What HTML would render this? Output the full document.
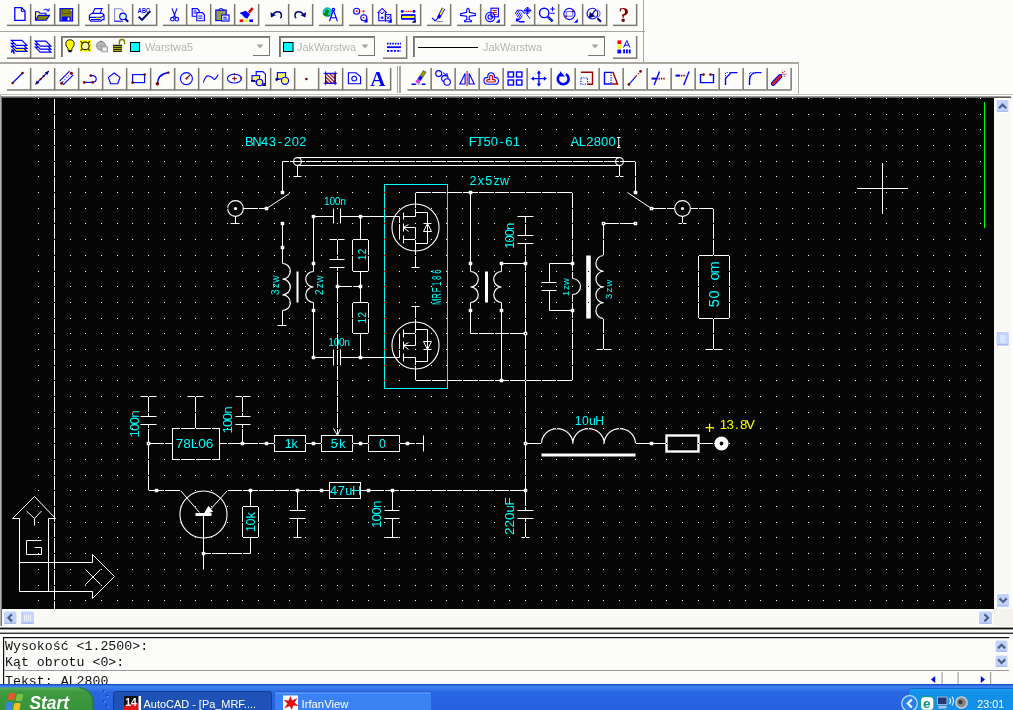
<!DOCTYPE html>
<html lang="pl"><head><meta charset="utf-8"><title>AutoCAD - [Pa_MRF186.dwg]</title>
<style>
html,body{margin:0;padding:0;background:#fcfdfa;}
body{width:1013px;height:710px;overflow:hidden;position:relative;}
svg{position:absolute;left:0;top:0;display:block;}
.cad text{font-family:"Liberation Sans","DejaVu Sans",sans-serif;text-anchor:middle;}
.cmd{position:absolute;left:5px;top:639.200px;margin:0;font-family:"Liberation Mono","DejaVu Sans Mono",monospace;font-size:13.250px;line-height:15.500px;color:#111;white-space:pre;}
.cmd3{top:674.200px;}
.tbtxt{font-family:"Liberation Sans",sans-serif;fill:#b4b4b4;}
</style></head><body>
<svg width="1013" height="710" viewBox="0 0 1013 710">
<g shape-rendering="crispEdges">
<rect x="0" y="30.5" width="645" height="1.6" fill="#a9a7a0"/>
<rect x="0" y="62" width="799" height="1.6" fill="#a9a7a0"/>
<rect x="643" y="0" width="1.4" height="63" fill="#a9a7a0"/>
<rect x="798" y="62" width="1.4" height="33" fill="#a9a7a0"/>
<rect x="0" y="94" width="1013" height="1" fill="#c2c2be"/>
<rect x="0" y="96" width="1013" height="1" fill="#9c9c9c"/>
<rect x="0" y="97" width="1013" height="1" fill="#5e5e5e"/>
<rect x="0" y="95" width="1" height="531" fill="#b4b4b4"/>
<rect x="1" y="96" width="1" height="530" fill="#777"/>
<rect x="396.6" y="66" width="1.2" height="27" fill="#a9a7a0"/>
<rect x="399.4" y="66" width="1.2" height="27" fill="#a9a7a0"/>
<rect x="61" y="36" width="209" height="2" fill="#8a877f"/>
<rect x="61" y="36" width="2" height="21" fill="#8a877f"/>
<rect x="61" y="36" width="209" height="1" fill="#74716a"/>
<rect x="61" y="36" width="1" height="21" fill="#74716a"/>
<rect x="268.8" y="38" width="1.3" height="18.2" fill="#7b7870"/>
<rect x="252.5" y="55" width="16" height="1.3" fill="#7b7870"/>
<rect x="279" y="36" width="96" height="2" fill="#8a877f"/>
<rect x="279" y="36" width="2" height="21" fill="#8a877f"/>
<rect x="279" y="36" width="96" height="1" fill="#74716a"/>
<rect x="279" y="36" width="1" height="21" fill="#74716a"/>
<rect x="373.8" y="38" width="1.3" height="18.2" fill="#7b7870"/>
<rect x="357.5" y="55" width="16" height="1.3" fill="#7b7870"/>
<rect x="413" y="36" width="192" height="2" fill="#8a877f"/>
<rect x="413" y="36" width="2" height="21" fill="#8a877f"/>
<rect x="413" y="36" width="192" height="1" fill="#74716a"/>
<rect x="413" y="36" width="1" height="21" fill="#74716a"/>
<rect x="603.8" y="38" width="1.3" height="18.2" fill="#7b7870"/>
<rect x="587.5" y="55" width="16" height="1.3" fill="#7b7870"/>
<rect x="418" y="47" width="60" height="1" fill="#000"/>
</g>
<g>
<rect x="29.9" y="4" width="1.500" height="22.1" fill="#7b7870"/>
<rect x="7" y="24.6" width="23" height="1.500" fill="#7b7870"/>
<rect x="53.9" y="4" width="1.500" height="22.1" fill="#7b7870"/>
<rect x="31" y="24.6" width="23" height="1.500" fill="#7b7870"/>
<rect x="77.9" y="4" width="1.500" height="22.1" fill="#7b7870"/>
<rect x="55" y="24.6" width="23" height="1.500" fill="#7b7870"/>
<rect x="107.9" y="4" width="1.500" height="22.1" fill="#7b7870"/>
<rect x="85" y="24.6" width="23" height="1.500" fill="#7b7870"/>
<rect x="131.9" y="4" width="1.500" height="22.1" fill="#7b7870"/>
<rect x="109" y="24.6" width="23" height="1.500" fill="#7b7870"/>
<rect x="155.9" y="4" width="1.500" height="22.1" fill="#7b7870"/>
<rect x="133" y="24.6" width="23" height="1.500" fill="#7b7870"/>
<rect x="185.9" y="4" width="1.500" height="22.1" fill="#7b7870"/>
<rect x="163" y="24.6" width="23" height="1.500" fill="#7b7870"/>
<rect x="209.9" y="4" width="1.500" height="22.1" fill="#7b7870"/>
<rect x="187" y="24.6" width="23" height="1.500" fill="#7b7870"/>
<rect x="233.9" y="4" width="1.500" height="22.1" fill="#7b7870"/>
<rect x="211" y="24.6" width="23" height="1.500" fill="#7b7870"/>
<rect x="257.9" y="4" width="1.500" height="22.1" fill="#7b7870"/>
<rect x="235" y="24.6" width="23" height="1.500" fill="#7b7870"/>
<rect x="287.9" y="4" width="1.500" height="22.1" fill="#7b7870"/>
<rect x="265" y="24.6" width="23" height="1.500" fill="#7b7870"/>
<rect x="311.9" y="4" width="1.500" height="22.1" fill="#7b7870"/>
<rect x="289" y="24.6" width="23" height="1.500" fill="#7b7870"/>
<rect x="341.9" y="4" width="1.500" height="22.1" fill="#7b7870"/>
<rect x="319" y="24.6" width="23" height="1.500" fill="#7b7870"/>
<rect x="371.9" y="4" width="1.500" height="22.1" fill="#7b7870"/>
<rect x="349" y="24.6" width="23" height="1.500" fill="#7b7870"/>
<rect x="395.9" y="4" width="1.500" height="22.1" fill="#7b7870"/>
<rect x="373" y="24.6" width="23" height="1.500" fill="#7b7870"/>
<rect x="419.9" y="4" width="1.500" height="22.1" fill="#7b7870"/>
<rect x="397" y="24.6" width="23" height="1.500" fill="#7b7870"/>
<rect x="449.9" y="4" width="1.500" height="22.1" fill="#7b7870"/>
<rect x="427" y="24.6" width="23" height="1.500" fill="#7b7870"/>
<rect x="479.9" y="4" width="1.500" height="22.1" fill="#7b7870"/>
<rect x="457" y="24.6" width="23" height="1.500" fill="#7b7870"/>
<rect x="503.9" y="4" width="1.500" height="22.1" fill="#7b7870"/>
<rect x="481" y="24.6" width="23" height="1.500" fill="#7b7870"/>
<rect x="533.9" y="4" width="1.500" height="22.1" fill="#7b7870"/>
<rect x="511" y="24.6" width="23" height="1.500" fill="#7b7870"/>
<rect x="557.9" y="4" width="1.500" height="22.1" fill="#7b7870"/>
<rect x="535" y="24.6" width="23" height="1.500" fill="#7b7870"/>
<rect x="581.9" y="4" width="1.500" height="22.1" fill="#7b7870"/>
<rect x="559" y="24.6" width="23" height="1.500" fill="#7b7870"/>
<rect x="605.9" y="4" width="1.500" height="22.1" fill="#7b7870"/>
<rect x="583" y="24.6" width="23" height="1.500" fill="#7b7870"/>
<rect x="635.9" y="4" width="1.500" height="22.1" fill="#7b7870"/>
<rect x="613" y="24.6" width="23" height="1.500" fill="#7b7870"/>
<rect x="29.9" y="36" width="1.500" height="22.9" fill="#7b7870"/>
<rect x="7" y="57.4" width="23" height="1.500" fill="#7b7870"/>
<rect x="53.9" y="36" width="1.500" height="22.9" fill="#7b7870"/>
<rect x="31" y="57.4" width="23" height="1.500" fill="#7b7870"/>
<rect x="405.9" y="36" width="1.500" height="22.9" fill="#7b7870"/>
<rect x="383" y="57.4" width="23" height="1.500" fill="#7b7870"/>
<rect x="635.9" y="36" width="1.500" height="22.9" fill="#7b7870"/>
<rect x="613" y="57.4" width="23" height="1.500" fill="#7b7870"/>
<rect x="29.9" y="68" width="1.500" height="22.7" fill="#7b7870"/>
<rect x="7" y="89.2" width="23" height="1.500" fill="#7b7870"/>
<rect x="53.9" y="68" width="1.500" height="22.7" fill="#7b7870"/>
<rect x="31" y="89.2" width="23" height="1.500" fill="#7b7870"/>
<rect x="77.9" y="68" width="1.500" height="22.7" fill="#7b7870"/>
<rect x="55" y="89.2" width="23" height="1.500" fill="#7b7870"/>
<rect x="101.9" y="68" width="1.500" height="22.7" fill="#7b7870"/>
<rect x="79" y="89.2" width="23" height="1.500" fill="#7b7870"/>
<rect x="125.9" y="68" width="1.500" height="22.7" fill="#7b7870"/>
<rect x="103" y="89.2" width="23" height="1.500" fill="#7b7870"/>
<rect x="149.9" y="68" width="1.500" height="22.7" fill="#7b7870"/>
<rect x="127" y="89.2" width="23" height="1.500" fill="#7b7870"/>
<rect x="173.9" y="68" width="1.500" height="22.7" fill="#7b7870"/>
<rect x="151" y="89.2" width="23" height="1.500" fill="#7b7870"/>
<rect x="197.9" y="68" width="1.500" height="22.7" fill="#7b7870"/>
<rect x="175" y="89.2" width="23" height="1.500" fill="#7b7870"/>
<rect x="221.9" y="68" width="1.500" height="22.7" fill="#7b7870"/>
<rect x="199" y="89.2" width="23" height="1.500" fill="#7b7870"/>
<rect x="245.9" y="68" width="1.500" height="22.7" fill="#7b7870"/>
<rect x="223" y="89.2" width="23" height="1.500" fill="#7b7870"/>
<rect x="269.9" y="68" width="1.500" height="22.7" fill="#7b7870"/>
<rect x="247" y="89.2" width="23" height="1.500" fill="#7b7870"/>
<rect x="293.9" y="68" width="1.500" height="22.7" fill="#7b7870"/>
<rect x="271" y="89.2" width="23" height="1.500" fill="#7b7870"/>
<rect x="317.9" y="68" width="1.500" height="22.7" fill="#7b7870"/>
<rect x="295" y="89.2" width="23" height="1.500" fill="#7b7870"/>
<rect x="341.9" y="68" width="1.500" height="22.7" fill="#7b7870"/>
<rect x="319" y="89.2" width="23" height="1.500" fill="#7b7870"/>
<rect x="365.9" y="68" width="1.500" height="22.7" fill="#7b7870"/>
<rect x="343" y="89.2" width="23" height="1.500" fill="#7b7870"/>
<rect x="389.9" y="68" width="1.500" height="22.7" fill="#7b7870"/>
<rect x="367" y="89.2" width="23" height="1.500" fill="#7b7870"/>
<rect x="430.4" y="68" width="1.500" height="22.7" fill="#7b7870"/>
<rect x="407.5" y="89.2" width="23" height="1.500" fill="#7b7870"/>
<rect x="454.4" y="68" width="1.500" height="22.7" fill="#7b7870"/>
<rect x="431.5" y="89.2" width="23" height="1.500" fill="#7b7870"/>
<rect x="478.4" y="68" width="1.500" height="22.7" fill="#7b7870"/>
<rect x="455.5" y="89.2" width="23" height="1.500" fill="#7b7870"/>
<rect x="502.4" y="68" width="1.500" height="22.7" fill="#7b7870"/>
<rect x="479.5" y="89.2" width="23" height="1.500" fill="#7b7870"/>
<rect x="526.4" y="68" width="1.500" height="22.7" fill="#7b7870"/>
<rect x="503.5" y="89.2" width="23" height="1.500" fill="#7b7870"/>
<rect x="550.4" y="68" width="1.500" height="22.7" fill="#7b7870"/>
<rect x="527.5" y="89.2" width="23" height="1.500" fill="#7b7870"/>
<rect x="574.4" y="68" width="1.500" height="22.7" fill="#7b7870"/>
<rect x="551.5" y="89.2" width="23" height="1.500" fill="#7b7870"/>
<rect x="598.4" y="68" width="1.500" height="22.7" fill="#7b7870"/>
<rect x="575.5" y="89.2" width="23" height="1.500" fill="#7b7870"/>
<rect x="622.4" y="68" width="1.500" height="22.7" fill="#7b7870"/>
<rect x="599.5" y="89.2" width="23" height="1.500" fill="#7b7870"/>
<rect x="646.4" y="68" width="1.500" height="22.7" fill="#7b7870"/>
<rect x="623.5" y="89.2" width="23" height="1.500" fill="#7b7870"/>
<rect x="670.4" y="68" width="1.500" height="22.7" fill="#7b7870"/>
<rect x="647.5" y="89.2" width="23" height="1.500" fill="#7b7870"/>
<rect x="694.4" y="68" width="1.500" height="22.7" fill="#7b7870"/>
<rect x="671.5" y="89.2" width="23" height="1.500" fill="#7b7870"/>
<rect x="718.4" y="68" width="1.500" height="22.7" fill="#7b7870"/>
<rect x="695.5" y="89.2" width="23" height="1.500" fill="#7b7870"/>
<rect x="742.4" y="68" width="1.500" height="22.7" fill="#7b7870"/>
<rect x="719.5" y="89.2" width="23" height="1.500" fill="#7b7870"/>
<rect x="766.4" y="68" width="1.500" height="22.7" fill="#7b7870"/>
<rect x="743.5" y="89.2" width="23" height="1.500" fill="#7b7870"/>
<rect x="790.4" y="68" width="1.500" height="22.7" fill="#7b7870"/>
<rect x="767.5" y="89.2" width="23" height="1.500" fill="#7b7870"/>
<polygon points="256.5,44.6 263.5,44.6 260,48.2" fill="#a0a0a0"/>
<polygon points="361.5,44.6 368.5,44.6 365,48.2" fill="#a0a0a0"/>
<polygon points="591.5,44.6 598.5,44.6 595,48.2" fill="#a0a0a0"/>
<g transform="translate(10 7)" fill="none" stroke="#0000ff" stroke-width="1.120"><path d="M4.800 .6h6.800l3.400 3.400v9.400h-10.200z" stroke-width="1.300"/><path d="M11.400 .8v3.400h3.400"/></g>
<g transform="translate(34 7)" fill="none" stroke="#0000ff" stroke-width="1.120"><path d="M1.5 13.2v-8.4h3.2l1.2 1.4h6v2.2" fill="#ffff80"/><path d="M1.5 13.2l3-4.8h11l-3.2 4.8z" fill="#808000"/><path d="M9.5 3.2q2.6-2.6 5 .2" stroke-width="1"/><path d="M15 1.4v2.4h-2.4" stroke-width="1"/></g>
<g transform="translate(58 7)" fill="none" stroke="#0000ff" stroke-width="1.120"><rect x="2" y="1.6" width="12.6" height="12.4" fill="#808000"/><path d="M4.400 2v4.600h7.600v-4.600" stroke="#5a5a00" stroke-width="1"/><rect x="4" y="9.6" width="8.6" height="4.4" fill="#0000ff" stroke="none"/><rect x="9.6" y="10.6" width="1.8" height="2.8" fill="#fff" stroke="none"/><rect x="12.6" y="2.6" width="1.2" height="1.4" fill="#fff" stroke="none"/></g>
<g transform="translate(88 7)" fill="none" stroke="#0000ff" stroke-width="1.120"><path d="M4.6 6.6l2.4-5h7l-2 5" fill="#fff"/><path d="M1.4 8.4l2.6-2h10.4l1.6 1.6v4.6h-1.8l-1.4 1.6h-9.6l-1.8-1.4z" fill="#fff"/><path d="M1.4 10.4h11.6l3-2.2M3 12.6h9.6"/><rect x="8" y="10.6" width="3.4" height="1.4" fill="#ffff00" stroke="none"/></g>
<g transform="translate(112 7)" fill="none" stroke="#0000ff" stroke-width="1.120"><path d="M2.6 14.2v-12.4h6.6l2.6 2.8" stroke="#8a8ad8"/><path d="M2.2 14.2h8.6"/><circle cx="11" cy="9.4" r="3.3" fill="#cff" stroke="#0000ff"/><path d="M13.4 12l2.8 2.8" stroke="#000080" stroke-width="2"/></g>
<text x="137.8" y="13.2" font-family="Liberation Sans,sans-serif" font-size="7" font-weight="bold" fill="#00f" textLength="12.4" lengthAdjust="spacingAndGlyphs">ABC</text>
<g transform="translate(136 7)" fill="none" stroke="#0000ff" stroke-width="1.120"><path d="M2.6 9.6l3.4 3.4 8.4-9" stroke="#000080" stroke-width="1.9"/></g>
<g transform="translate(166 7)" fill="none" stroke="#0000ff" stroke-width="1.120"><path d="M6 1.4l3.6 9.4M11 1.4l-3.6 9.4"/><circle cx="6.4" cy="12.2" r="1.8"/><circle cx="10.8" cy="12.2" r="1.8"/></g>
<g transform="translate(190 7)" fill="none" stroke="#0000ff" stroke-width="1.120"><path d="M2.2 1.6h5l2 2v5.6h-7z" fill="#fff"/><path d="M6.8 5.6h5.4l2.2 2.2v6h-7.6z" fill="#fff"/><path d="M3.6 4h3M3.6 6h2.4M8.4 9h4M8.4 11.2h4" stroke-width="1"/></g>
<g transform="translate(214 7)" fill="none" stroke="#0000ff" stroke-width="1.120"><rect x="1.8" y="3" width="10.4" height="10.6" fill="#9a9a50"/><path d="M4.6 3.2q2.4-3.4 4.8 0z" fill="#fff"/><rect x="7.6" y="8" width="7.4" height="6" fill="#fff"/><path d="M9.2 10.2h3.4M9.2 12h4.4" stroke-width="1"/></g>
<g transform="translate(238 7)" fill="none" stroke="#0000ff" stroke-width="1.120"><path d="M14.6 1.2l-4.4 5.2" stroke="#d00000" stroke-width="2.6"/><path d="M10.6 5.2l-3 3.6" stroke="#fff" stroke-width="3"/><path d="M2.2 6.2q2 .2 3.2 2.2t3.6 2.6l2.2-3.6-3.6-3z" fill="#0000ff" stroke="#0000ff"/><rect x="1.6" y="12.4" width="3.6" height="2.6" fill="#f00" stroke="none"/><rect x="6.6" y="12.4" width="3.6" height="2.6" fill="#ffff00" stroke="none"/><rect x="11.4" y="12.4" width="3.6" height="2.6" fill="#0000ff" stroke="none"/></g>
<g transform="translate(268 7)" fill="none" stroke="#0000ff" stroke-width="1.120"><path d="M5 8.200q1.200-3.400 4.600-3.400t3.800 2.800-1.200 3.600" stroke="#000080" stroke-width="1.500"/><path d="M2.400 5.200l.6 5.400 4.800-2.400z" fill="#000080" stroke="none"/></g>
<g transform="translate(292 7)" fill="none" stroke="#0000ff" stroke-width="1.120"><path d="M11.400 8.200q-1.200-3.400-4.600-3.400t-3.800 2.800 1.200 3.600" stroke="#000080" stroke-width="1.500"/><path d="M14 5.200l-.6 5.400-4.800-2.400z" fill="#000080" stroke="none"/></g>
<g transform="translate(322 7)" fill="none" stroke="#0000ff" stroke-width="1.120"><circle cx="5.400" cy="5.200" r="4.400" fill="#00d8d8" stroke="#009090" stroke-width=".8"/><path d="M3 3.4q2-1.6 3.6-.2t-.4 2.6 1 2.4-2.8.6-1.6-2.8z" fill="#008000" stroke="none"/><path d="M11.4 3.2l-4 11M11.4 3.2l4 11M8.6 10.8h5.6"/><circle cx="11.4" cy="2.6" r="1.2"/></g>
<g transform="translate(352 7)" fill="none" stroke="#0000ff" stroke-width="1.120"><circle cx="4.6" cy="4.2" r="3"/><circle cx="11.8" cy="10.8" r="3"/><circle cx="4.8" cy="4.2" r="0.9" fill="#f00" stroke="none"/><circle cx="11.6" cy="4.2" r="0.9" fill="#f00" stroke="none"/><circle cx="11.6" cy="10.6" r="0.9" fill="#f00" stroke="none"/><path d="M7.6 4.2h3M11.6 5.4v3" stroke="#f00" stroke-width=".8" stroke-dasharray="1 1"/><path d="M15.6 11.6v4h-4z" fill="#0000ff" stroke="none"/></g>
<g transform="translate(376 7)" fill="none" stroke="#0000ff" stroke-width="1.120"><path d="M1.6 5.8l4.6-4.4 4.6 4.4M2.8 5.2v8.6h6.6v-8.6"/><rect x="9.4" y="7.6" width="5.4" height="6.2"/><path d="M4.4 5.4l1.6 1.6 2-2.4M4.6 10.8h3M6.1 9.3v3M10.6 9.2l3 3M13.6 9.2l-3 3" stroke-width="1"/><path d="M15.8 11.8v4h-4z" fill="#0000ff" stroke="none"/></g>
<g transform="translate(400 7)" fill="none" stroke="#0000ff" stroke-width="1.120"><path d="M3.2 4.4h10" stroke="#f00" stroke-dasharray="1.2 1.2"/><circle cx="2.2" cy="4.4" r="1.4" fill="#0000ff" stroke="none"/><circle cx="14" cy="4.4" r="1.4" fill="#0000ff" stroke="none"/><rect x="1.6" y="8" width="13.4" height="3.6" fill="#ffff00"/><path d="M1.6 8h13.4M1.6 12h13.4" stroke-width="1.5"/><path d="M15.8 11.8v4h-4z" fill="#000080" stroke="none"/></g>
<g transform="translate(430 7)" fill="none" stroke="#0000ff" stroke-width="1.120"><path d="M13.6 1.4l-5.2 9.6" stroke="#0000ff" stroke-width="3.4"/><path d="M13.6 1.4l-3.4 6.4" stroke="#ffff00" stroke-width="1.8"/><path d="M2 10.8l3.2 3.2 3.6-3.8" stroke-width="1.2"/><path d="M6.4 14.6h6.6" stroke="#888" stroke-width="1"/></g>
<g transform="translate(460 7)" fill="none" stroke="#0000ff" stroke-width="1.120"><path d="M8 1.2q1.6.4 1.4 4.2l6 1.4v1.6l-6 .8-.4 3.4 2.4 1v1.2h-6.800v-1.200l2.400-1-.4-3.400-6-.8v-1.600l6-1.400q-.2-3.800 1.400-4.200z" fill="#fff"/></g>
<g transform="translate(484 7)" fill="none" stroke="#0000ff" stroke-width="1.120"><rect x="7" y="1.2" width="7.4" height="8.6" fill="#fff"/><path d="M8.6 3.4h4.2M8.6 5.4h4.2M8.6 7.400h4.200" stroke="#c00000" stroke-width="1"/><circle cx="6.2" cy="10" r="4.600"/><circle cx="6.2" cy="10" r="2.2"/><path d="M15.800 11.800v4h-4z" fill="#0000ff" stroke="none"/></g>
<g transform="translate(514 7)" fill="none" stroke="#0000ff" stroke-width="1.120"><path d="M1 7l2.400-3.600M2.200 8.400l2.800-4.200M3.400 9.800l3-4.400M4.600 11.200l3.200-4.800M5.800 12.400l2.600-3.800" stroke-width="1"/><path d="M2.800 3.200h4.600l3.400 3.400"/><path d="M13.500 0l3.500 3.500-3.500 3.500-3.500-3.500zM13.500 0v7M10 3.500h7M11.700 1.700l3.600 3.600M15.300 1.700l-3.600 3.600" stroke-width=".9"/><path d="M12 6.400l4 5.400" stroke-width="1"/><path d="M2 12.200h3.800M2 13.700h2.800M4.800 14.800h5.800" stroke-width="1.400"/></g>
<g transform="translate(538 7)" fill="none" stroke="#0000ff" stroke-width="1.120"><circle cx="6.200" cy="5.900" r="4.700" stroke-width="1.400"/><path d="M10 9.800l4.600 4.600" stroke="#0000ff" stroke-width="2.600"/><path d="M10.800 10.600l3.400 3.400" stroke="#008080" stroke-width="1"/><path d="M12.200 2h4.600M14.500 -.3v4.600M12.200 6.300h4.600" stroke-width="1.100"/></g>
<g transform="translate(562 7)" fill="none" stroke="#0000ff" stroke-width="1.120"><circle cx="7.400" cy="7" r="5.600"/><rect x="4.200" y="4.600" width="6.600" height="4.600" stroke="#7070ff"/><circle cx="4.2" cy="9.2" r="1" fill="#800000" stroke="none"/><circle cx="10.8" cy="4.6" r="1" fill="#800000" stroke="none"/><path d="M15.800 11.800v4h-4z" fill="#0000ff" stroke="none"/></g>
<g transform="translate(586 7)" fill="none" stroke="#0000ff" stroke-width="1.120"><circle cx="6.400" cy="6.600" r="5.400"/><circle cx="10.600" cy="6.600" r="3.400" stroke="#7070ff"/><path d="M9.600 3l-6 7.400M3.600 10.400l.6-4.400 3.400 3z" stroke="#000080" fill="#000080"/><path d="M11.400 11.200l3.600 3.600" stroke="#000080" stroke-width="2"/></g>
<text x="618.500" y="22" font-family="Liberation Serif,serif" font-size="21.500" font-weight="bold" fill="#800000">?</text>
<g transform="translate(11 39)" fill="none" stroke="#0000ff" stroke-width="1.120"><path d="M0.3 7.3h10.6l5 5h-10.6z" fill="#ffff00" stroke-width="1.2"/><path d="M0.3 4.3h10.6l5 5h-10.6z" fill="#fff" stroke-width="1.2"/><path d="M0.3 1.3h10.6l5 5h-10.6z" fill="#fff" stroke-width="1.2"/><path d="M2.6 11.200l-2.600 2.400M2.600 11.200l.4 3.600M2.600 11.200l-2.400-.2" stroke="#0000ff" stroke-width="1.400"/></g>
<g transform="translate(35 39)" fill="none" stroke="#0000ff" stroke-width="1.120"><path d="M0.3 8.2h10.6l5 5h-10.6z" fill="#fff" stroke-width="1.2"/><path d="M0.3 5.2h10.6l5 5h-10.6z" fill="#fff" stroke-width="1.2"/><path d="M0.3 2.2h10.6l5 5h-10.6z" fill="#fff" stroke-width="1.2"/></g>
<g transform="translate(64 39)" stroke="#202000" stroke-width="1" fill="none"><path d="M6 0.800q4.200 0 4.200 4 0 2.200-2.200 4.600v2h-4v-2q-2.200-2.400-2.200-4.600 0-4 4.200-4z" fill="#ffff00"/><path d="M4.400 12.400h3.200" stroke="#000" stroke-width="1.600"/></g>
<g transform="translate(79 39)"><rect x="0.600" y="1.200" width="11.400" height="11.400" fill="#ffff00"/><circle cx="6.300" cy="6.900" r="3.800" fill="#ffffa0" stroke="#303000" stroke-width="1.200"/><path d="M1.600 2.200l2 2M11 2.200l-2 2M1.600 11.600l2-2M11 11.600l-2-2" stroke="#303000" stroke-width="1.200"/></g>
<g transform="translate(95 39)"><circle cx="6" cy="6.800" r="4.400" fill="#b8b8b8" stroke="#888"/><path d="M6 1v11.600M.4 6.800h11.200" stroke="#999" stroke-width=".8" stroke-dasharray="1 1"/><rect x="7" y="7.800" width="5.400" height="5" fill="#eee" stroke="#999"/></g>
<g transform="translate(112 39)"><path d="M7.400 5.400v-2.200q0-2.600 2.600-2.600t2.600 2.600v2" fill="none" stroke="#808000" stroke-width="1.500"/><rect x="1" y="5.800" width="9" height="7.200" fill="#202000"/><path d="M1 7.600h9M1 9.600h9M1 11.600h9" stroke="#c8c800" stroke-width=".9"/></g>
<rect x="130.500" y="42.500" width="9" height="9" fill="#0ff" stroke="#000" stroke-width="1"/>
<rect x="283.500" y="42.500" width="9.500" height="9" fill="#0ff" stroke="#000" stroke-width="1"/>
<g transform="translate(386 39)" fill="none" stroke="#0000ff" stroke-width="1.120"><path d="M1 4.600h14" stroke-dasharray="1.600 1" stroke-width="1.800"/><path d="M1 8.200h14" stroke-width="1.800"/><path d="M1 11.800h14" stroke-dasharray="2.200 1.200" stroke-width="1.800"/></g>
<g transform="translate(616 39)" fill="none" stroke="#0000ff" stroke-width="1.120"><rect x="1.400" y="1.400" width="3.800" height="3.600" fill="#f00" stroke="none"/><rect x="1.400" y="6" width="3.800" height="3.600" fill="#ffff00" stroke="none"/><rect x="1.400" y="10.600" width="3.800" height="3.800" fill="#0000ff" stroke="none"/><path d="M7.600 8.600l3.200-7 3.200 7M8.800 6.200h4" stroke-width="1"/><rect x="7.200" y="10.400" width="1.800" height="4" fill="#0000ff" stroke="none"/><rect x="10" y="10.400" width="1.800" height="4" fill="#0000ff" stroke="none"/><rect x="12.800" y="10.400" width="1.800" height="4" fill="#0000ff" stroke="none"/></g>
<g transform="translate(10 70)" fill="none" stroke="#0000ff" stroke-width="1.120"><path d="M2.600 13l10-10"/><circle cx="2.6" cy="13" r="1.3" fill="#800000" stroke="none"/><circle cx="12.6" cy="3" r="1.3" fill="#800000" stroke="none"/></g>
<g transform="translate(34 70)" fill="none" stroke="#0000ff" stroke-width="1.120"><path d="M1.400 14.400l13.400-13.400"/><path d="M14.800 1l-4 1.400 2.600 2.600zM1.400 14.400l4-1.400-2.600-2.600z" fill="#000080" stroke="none"/><circle cx="6.6" cy="9.2" r="1.1" fill="#800000" stroke="none"/><circle cx="9.6" cy="6.2" r="1.1" fill="#800000" stroke="none"/></g>
<g transform="translate(58 70)" fill="none" stroke="#0000ff" stroke-width="1.120"><path d="M1.600 11.200l10-10M5.200 14.800l10-10"/><path d="M4.400 12l8-8" stroke-dasharray="1.200 1.600" stroke-width="1"/><circle cx="3.6" cy="13.2" r="1.5" fill="#800000" stroke="none"/><circle cx="13.4" cy="3.2" r="1.5" fill="#800000" stroke="none"/></g>
<g transform="translate(82 70)" fill="none" stroke="#0000ff" stroke-width="1.120"><path d="M2.200 12.400h8.600q3.400-.4 3.400-3.400t-3.400-3.400h-2"/><circle cx="2.2" cy="12.4" r="1.3" fill="#800000" stroke="none"/><circle cx="10.6" cy="12.4" r="1.3" fill="#800000" stroke="none"/><circle cx="8.8" cy="5.6" r="1.3" fill="#800000" stroke="none"/></g>
<g transform="translate(106 70)" fill="none" stroke="#0000ff" stroke-width="1.120"><path d="M8.200 3l5.800 4.400-2.200 6.400h-7.200l-2.200-6.400z"/></g>
<g transform="translate(130 70)" fill="none" stroke="#0000ff" stroke-width="1.120"><rect x="2.600" y="4.600" width="12" height="8"/><circle cx="2.6" cy="12.6" r="1.3" fill="#800000" stroke="none"/><circle cx="14.6" cy="4.6" r="1.3" fill="#800000" stroke="none"/></g>
<g transform="translate(154 70)" fill="none" stroke="#0000ff" stroke-width="1.120"><path d="M3.400 14q.4-10 11.200-11.400" stroke-width="1.500"/><circle cx="3.4" cy="13.8" r="1.8" fill="#800000" stroke="none"/><circle cx="14.4" cy="2.6" r="1.2" fill="#800000" stroke="none"/><circle cx="7.4" cy="5.6" r="1" fill="#0000ff" stroke="none"/></g>
<g transform="translate(178 70)" fill="none" stroke="#0000ff" stroke-width="1.120"><circle cx="8.400" cy="8.600" r="6"/><path d="M8.400 8.600l3.600-3.600" stroke="#800000"/><circle cx="8.4" cy="8.6" r="1.1" fill="#800000" stroke="none"/></g>
<g transform="translate(202 70)" fill="none" stroke="#0000ff" stroke-width="1.120"><path d="M1.400 12.600q2-7.600 5.600-6.600t4.600 3 4.600-4.600"/></g>
<g transform="translate(226 70)" fill="none" stroke="#0000ff" stroke-width="1.120"><ellipse cx="8.400" cy="8.600" rx="7" ry="4.400"/><circle cx="8.4" cy="8.6" r="1" fill="#800000" stroke="none"/><circle cx="8.4" cy="4.2" r="1" fill="#800000" stroke="none"/><circle cx="15.2" cy="8.6" r="1" fill="#800000" stroke="none"/><path d="M6 8.600h5M8.400 6.400v4.400" stroke="#800000" stroke-width=".8"/></g>
<g transform="translate(250 70)" fill="none" stroke="#0000ff" stroke-width="1.120"><path d="M6.200 1.600h6.600l2.600 2.600v9.600h-9.200z" fill="#fff"/><rect x="2" y="5.600" width="7.600" height="5.600" fill="#f4f470"/><circle cx="9.600" cy="12.400" r="3.200" fill="#f4f470"/><path d="M1 10.800h4" stroke="#000080" stroke-width="1.600"/><path d="M15.800 12v4h-4z" fill="#000080" stroke="none"/></g>
<g transform="translate(274 70)" fill="none" stroke="#0000ff" stroke-width="1.120"><rect x="3.400" y="2.600" width="8.200" height="6.400" fill="#f4f470"/><circle cx="11" cy="10.800" r="3.600" fill="#f4f470"/><path d="M1.400 9.400h4M1.400 9.400l2-1.400M1.400 9.400l2 1.400" stroke="#000080" stroke-width="1.200"/></g>
<g transform="translate(298 70)" fill="none" stroke="#0000ff" stroke-width="1.120"><circle cx="8.4" cy="9" r="1.3" fill="#800000" stroke="none"/></g>
<g transform="translate(322 70)" fill="none" stroke="#0000ff" stroke-width="1.120"><rect x="3.600" y="3.400" width="9.600" height="9.800" fill="#a03030" stroke="#800000"/><path d="M12.200 6.400l-3-3M12.200 10l-6.600-6.600M11.200 12.600l-7.600-7.600M7.800 12.800l-4-4" stroke="#fff" stroke-width="1.100"/><path d="M1.600 3.400h13.600M1.600 13.200h13.600M3.600 1.400v13.800M13.200 1.400v13.800" stroke-width="1"/></g>
<g transform="translate(346 70)" fill="none" stroke="#0000ff" stroke-width="1.120"><path d="M2.400 2.800h7.600l4.600 4v7h-12.200z"/><circle cx="8.200" cy="8.600" r="2.400"/></g>
<text x="370.300" y="85.800" font-family="Liberation Serif,serif" font-size="21" font-weight="bold" fill="#00f">A</text>
<g transform="translate(410.5 70)" fill="none" stroke="#0000ff" stroke-width="1.120"><path d="M14.400 1.200l-7.800 11.600" stroke="#0000ff" stroke-width="3.600"/><path d="M14.400 1.200l-3.600 5.400" stroke="#909000" stroke-width="3.600"/><path d="M8.800 9.400l-2.200 3.400" stroke="#e040e0" stroke-width="3.600"/><path d="M1 14.200h4.400M11.400 14.200h3.600" stroke-width="1.600"/><path d="M5.400 14.200h6" stroke="#aaa" stroke-width="1"/></g>
<g transform="translate(434.5 70)" fill="none" stroke="#0000ff" stroke-width="1.120"><circle cx="4.200" cy="3.600" r="3"/><circle cx="10.400" cy="8.600" r="3.200"/><circle cx="12.600" cy="12" r="3.200" fill="#fcfdfa"/><path d="M8.400 2.600l4.400 3M12.800 5.600l-.4-2.600M12.800 5.600l-2.800.2" stroke-width="1"/></g>
<g transform="translate(458.5 70)" fill="none" stroke="#0000ff" stroke-width="1.120"><path d="M8.600 1v15" stroke="#c00000" stroke-width="1"/><path d="M6.600 3.400v10.600h-5.200zM10.600 3.400v10.600h5.200z"/></g>
<g transform="translate(482.5 70)" fill="none" stroke="#0000ff" stroke-width="1.120"><path d="M1.400 10.800q-.2-3.400 3.800-3.400 0-4.600 3.400-4.600t3.400 4.600q4-.2 4 3.400t-4 3.400h-6.800q-3.800 0-3.800-3.400z"/><path d="M4.200 10.800q0-1.200 1.400-1.200h1.600v-3.400q0-1 1.400-1t1.400 1v3.400h1.600q1.400 0 1.400 1.200t-1.400 1.200h-6q-1.400 0-1.400-1.200z" stroke="#c00000"/></g>
<g transform="translate(506.5 70)" fill="none" stroke="#0000ff" stroke-width="1.120"><rect x="1.600" y="2" width="5.400" height="5" stroke-width="1.400"/><rect x="10" y="2" width="5.400" height="5" stroke-width="1.400"/><rect x="1.600" y="10" width="5.400" height="5" stroke-width="1.400"/><rect x="10" y="10" width="5.400" height="5" stroke-width="1.400"/></g>
<g transform="translate(530.5 70)" fill="none" stroke="#0000ff" stroke-width="1.120"><path d="M8.400 1.600v14M1.400 8.600h14" stroke-width="1.400"/><path d="M8.400 .6l-2.200 3h4.400zM8.400 16.600l-2.200-3h4.400zM.4 8.600l3-2.200v4.400zM16.400 8.600l-3-2.200v4.400z" fill="#0000ff" stroke="none"/></g>
<g transform="translate(554.5 70)" fill="none" stroke="#0000ff" stroke-width="1.120"><path d="M6 4.200a5.400 5.400 0 1 0 5.400 0" stroke-width="2.600"/><path d="M5.400 1v5.600h5z" fill="#0000ff" stroke="none"/></g>
<g transform="translate(578.5 70)" fill="none" stroke="#0000ff" stroke-width="1.120"><path d="M2.400 2.200h11.600v12h-5" stroke="#a00000" stroke-width="1.400"/><rect x="2.400" y="8" width="6.600" height="6.200" stroke-dasharray="1.200 1.200"/></g>
<g transform="translate(602.5 70)" fill="none" stroke="#0000ff" stroke-width="1.120"><path d="M8.600 2.400h-6.600v11.600h6.600" stroke-width="1.400"/><path d="M8.600 2.400h2l4.400 11.600h-6.400" stroke="#a00000" stroke-width="1.400"/><path d="M8.600 2.400v11.600" stroke-dasharray="1.200 1.200"/></g>
<g transform="translate(626.5 70)" fill="none" stroke="#0000ff" stroke-width="1.120"><path d="M2.400 14.400l7-8"/><path d="M9.400 6.400l4.600-5" stroke="#a00000" stroke-dasharray="1.600 1.400"/><circle cx="2.4" cy="14.4" r="1.3" fill="#800000" stroke="none"/><circle cx="14" cy="1.4" r="1.3" fill="#800000" stroke="none"/></g>
<g transform="translate(650.5 70)" fill="none" stroke="#0000ff" stroke-width="1.120"><path d="M9 1.400l-5.400 13.600" stroke-width="1.400"/><path d="M1 8.600h6" stroke-width="2"/><path d="M8 8.600h7" stroke="#a00000" stroke-width="1.800" stroke-dasharray="1.400 1"/></g>
<g transform="translate(674.5 70)" fill="none" stroke="#0000ff" stroke-width="1.120"><path d="M14.600 1.400l-5.400 13.600" stroke-width="1.400"/><path d="M1 5.600h4.600" stroke-width="2"/><path d="M6.400 5.600h5" stroke="#a00000" stroke-width="1.800" stroke-dasharray="1.400 1"/></g>
<g transform="translate(698.5 70)" fill="none" stroke="#0000ff" stroke-width="1.120"><path d="M4 4.600h-2v8h13v-8h-2" stroke-width="1.400"/><circle cx="5" cy="4.6" r="1.3" fill="#800000" stroke="none"/><circle cx="12" cy="4.6" r="1.3" fill="#800000" stroke="none"/></g>
<g transform="translate(722.5 70)" fill="none" stroke="#0000ff" stroke-width="1.120"><path d="M3 15v-6.400l5.600-6h6.400" stroke-width="1.400"/><path d="M3 8.600v-6h5.600" stroke-dasharray="1 1.400" stroke-width="1"/></g>
<g transform="translate(746.5 70)" fill="none" stroke="#0000ff" stroke-width="1.120"><path d="M3 15v-5q.4-7 7-7.400h5" stroke-width="1.400"/><path d="M3 9v-6.400h6.400" stroke-dasharray="1 1.400" stroke-width="1"/></g>
<g transform="translate(770.5 70)" fill="none" stroke="#0000ff" stroke-width="1.120"><path d="M2.600 13.600l7-7.200" stroke="#0000ff" stroke-width="4.600" stroke-linecap="round"/><path d="M2.600 13.600l7-7.200" stroke="#e02020" stroke-width="2.600" stroke-linecap="round"/><path d="M10.800 5l1.200-1.200" stroke="#0000ff" stroke-width="1"/><path d="M12.600 3.600l1.600-2.600M13 4.600l3-.6M12 3l-.4-2.400M13.400 5.800l2 1.400" stroke="#c00000" stroke-width=".9" stroke-dasharray="1.200 .8"/></g>
</g>
<g class="tbtxt" font-size="11.800"><text x="145" y="51" textLength="48" lengthAdjust="spacingAndGlyphs">Warstwa5</text><text x="297" y="51" textLength="59" lengthAdjust="spacingAndGlyphs">JakWarstwa</text><text x="483" y="51" textLength="59" lengthAdjust="spacingAndGlyphs">JakWarstwa</text></g>
<rect x="2" y="98" width="992" height="511" fill="#050505"/>
<rect x="54" y="98" width="1.300" height="511" fill="#fff" shape-rendering="crispEdges"/>
<rect x="984" y="102" width="1.400" height="126" fill="#0f0" shape-rendering="crispEdges"/>
<path d="M857 188.500H908M882.500 163V214" stroke="#fff" stroke-width="1" fill="none" shape-rendering="crispEdges"/>
<g fill="none" stroke="#fff" stroke-width="1"><path d="M34.500 496.500L12.500 518.500H19.500V591.500H92.500V598.500L114.500 576.500L92.500 554.500V562.500H48.500V518.500H55.500Z"/><path d="M19.500 562.500H48.500V591.500"/><path d="M26.500 511L34.500 518.500L41.500 511M34.500 518.500V525.500"/><path d="M41.500 540.500H26.500V554.500H41.500V547.500H34.500"/><path d="M85.500 569.500L100.500 584.500M100.500 569.500L85.500 584.500"/></g>
<g class="cad" fill="none" stroke="#fff" stroke-width="1">
<line x1="297.5" y1="157.5" x2="619.5" y2="157.5"/>
<line x1="297.5" y1="165.5" x2="619.5" y2="165.5"/>
<line x1="290.200" y1="161.5" x2="623.5" y2="161.5"/>
<circle cx="297.5" cy="161.5" r="3.92" stroke-width="1.100"/>
<circle cx="619.5" cy="161.5" r="3.92" stroke-width="1.100"/>
<line x1="297.5" y1="165.5" x2="297.5" y2="176.5"/>
<line x1="293.5" y1="176.5" x2="301.5" y2="176.5"/>
<line x1="619.5" y1="165.5" x2="619.5" y2="176.5"/>
<line x1="615.5" y1="176.5" x2="623.5" y2="176.5"/>
<polyline points="293.5,161.5 282.5,161.5 282.5,192.5"/>
<rect x="280.7" y="190.7" width="3.6" height="3.6" rx="0.9" fill="#fff" stroke="none"/>
<line x1="266.5" y1="208.5" x2="289.5" y2="193.5"/>
<rect x="264.7" y="206.7" width="3.6" height="3.6" rx="0.9" fill="#fff" stroke="none"/>
<line x1="242.5" y1="208.5" x2="266.5" y2="208.5"/>
<circle cx="235.5" cy="208.5" r="7.85" stroke-width="1.100"/>
<circle cx="235.5" cy="208.5" r="1.6" fill="#fff" stroke="none"/>
<line x1="235.5" y1="216.5" x2="235.5" y2="223.5"/>
<line x1="230.5" y1="223.5" x2="239.5" y2="223.5"/>
<rect x="280.7" y="221.7" width="3.6" height="3.6" rx="0.9" fill="#fff" stroke="none"/>
<rect x="280.7" y="245.7" width="3.6" height="3.6" rx="0.9" fill="#fff" stroke="none"/>
<line x1="282.5" y1="223.5" x2="282.5" y2="263.5"/>
<path d="M282.5 263.5 a7.83 7.83 0 0 1 0 15.67 a7.83 7.83 0 0 1 0 15.67 a7.83 7.83 0 0 1 0 15.67" stroke-width="1.200"/>
<line x1="282.5" y1="310.5" x2="282.5" y2="325.5"/>
<line x1="277.5" y1="325.5" x2="286.5" y2="325.5"/>
<line x1="297.5" y1="271.5" x2="297.5" y2="302.5" stroke-width="2"/>
<line x1="313.5" y1="216.5" x2="313.5" y2="271.5"/>
<path d="M313.5 271.5 a7.75 7.75 0 0 0 0 15.5 a7.75 7.75 0 0 0 0 15.5" stroke-width="1.200"/>
<line x1="313.5" y1="302.5" x2="313.5" y2="357.5"/>
<rect x="311.7" y="214.7" width="3.6" height="3.6" rx="0.9" fill="#fff" stroke="none"/>
<rect x="311.7" y="261.7" width="3.6" height="3.6" rx="0.9" fill="#fff" stroke="none"/>
<rect x="311.7" y="308.7" width="3.6" height="3.6" rx="0.9" fill="#fff" stroke="none"/>
<rect x="311.7" y="355.7" width="3.6" height="3.6" rx="0.9" fill="#fff" stroke="none"/>
<line x1="313.5" y1="216.5" x2="333.5" y2="216.5"/>
<line x1="333.5" y1="208.5" x2="333.5" y2="223.5"/>
<line x1="340.5" y1="208.5" x2="340.5" y2="223.5"/>
<line x1="340.5" y1="216.5" x2="399.5" y2="216.5"/>
<rect x="358.7" y="214.7" width="3.6" height="3.6" rx="0.9" fill="#fff" stroke="none"/>
<line x1="360.5" y1="216.5" x2="360.5" y2="239.5"/>
<rect x="352.5" y="239.5" width="16" height="32"/>
<line x1="360.5" y1="271.5" x2="360.5" y2="302.5"/>
<rect x="358.7" y="284.7" width="3.6" height="3.6" rx="0.9" fill="#fff" stroke="none"/>
<rect x="352.5" y="302.5" width="16" height="31"/>
<line x1="360.5" y1="333.5" x2="360.5" y2="357.5"/>
<rect x="358.7" y="355.7" width="3.6" height="3.6" rx="0.9" fill="#fff" stroke="none"/>
<line x1="329.5" y1="239.5" x2="344.5" y2="239.5"/>
<line x1="337.5" y1="239.5" x2="337.5" y2="259.5"/>
<line x1="329.5" y1="259.5" x2="344.5" y2="259.5"/>
<line x1="329.5" y1="267.5" x2="344.5" y2="267.5"/>
<line x1="337.5" y1="267.5" x2="337.5" y2="435.5"/>
<line x1="337.5" y1="286.5" x2="360.5" y2="286.5"/>
<rect x="335.7" y="284.7" width="3.6" height="3.6" rx="0.9" fill="#fff" stroke="none"/>
<rect x="336.95" y="285.95" width="1.1" height="1.1" fill="#050505" stroke="none"/>
<line x1="313.5" y1="357.5" x2="333.5" y2="357.5"/>
<line x1="333.5" y1="349.5" x2="333.5" y2="365.5"/>
<line x1="340.5" y1="349.5" x2="340.5" y2="365.5"/>
<line x1="340.5" y1="357.5" x2="399.5" y2="357.5"/>
<polyline points="333.5,428.5 337.5,435.5 340.5,428.5"/>
<rect x="384.5" y="184.5" width="63" height="204" stroke="#0ff"/>
<circle cx="415.5" cy="227.5" r="23.55" stroke-width="1.100"/>
<line x1="399.5" y1="216.5" x2="399.5" y2="239.5"/>
<line x1="403.5" y1="212.5" x2="403.5" y2="219.5"/>
<line x1="403.5" y1="223.5" x2="403.5" y2="231.5"/>
<line x1="403.5" y1="235.5" x2="403.5" y2="243.5"/>
<polyline points="403.5,216.5 415.5,216.5 415.5,192.5 572.5,192.5"/>
<polyline points="415.5,212.5 427.5,212.5 427.5,243.5 415.5,243.5"/>
<polyline points="403.5,227.5 415.5,227.5 415.5,267.5"/>
<line x1="403.5" y1="239.5" x2="415.5" y2="239.5"/>
<polyline points="408.5,224.5 403.5,227.5 408.5,231.5"/>
<polygon points="423.5,231.5 431.5,231.5 427.5,223.5" fill="none"/>
<line x1="423.5" y1="223.5" x2="431.5" y2="223.5"/>
<line x1="411.5" y1="267.5" x2="419.5" y2="267.5"/>
<circle cx="415.5" cy="345.5" r="23.55" stroke-width="1.100"/>
<line x1="411.5" y1="306.5" x2="419.5" y2="306.5"/>
<line x1="399.5" y1="333.5" x2="399.5" y2="357.5"/>
<line x1="403.5" y1="329.5" x2="403.5" y2="337.5"/>
<line x1="403.5" y1="341.5" x2="403.5" y2="349.5"/>
<line x1="403.5" y1="353.5" x2="403.5" y2="361.5"/>
<polyline points="403.5,333.5 415.5,333.5"/>
<polyline points="415.5,306.5 415.5,345.5 403.5,345.5"/>
<polyline points="415.5,329.5 427.5,329.5 427.5,361.5 415.5,361.5"/>
<polyline points="403.5,357.5 415.5,357.5 415.5,380.5 572.5,380.5"/>
<polyline points="408.5,342.5 403.5,345.5 408.5,349.5"/>
<polygon points="423.5,341.5 431.5,341.5 427.5,349.5" fill="none"/>
<line x1="423.5" y1="349.5" x2="431.5" y2="349.5"/>
<rect x="468.7" y="190.7" width="3.6" height="3.6" rx="0.9" fill="#fff" stroke="none"/>
<line x1="470.5" y1="192.5" x2="470.5" y2="271.5"/>
<path d="M470.5 271.5 a7.75 7.75 0 0 1 0 15.5 a7.75 7.75 0 0 1 0 15.5" stroke-width="1.200"/>
<polyline points="470.5,302.5 470.5,333.5 525.5,333.5"/>
<rect x="468.7" y="261.7" width="3.6" height="3.6" rx="0.9" fill="#fff" stroke="none"/>
<rect x="468.7" y="308.7" width="3.6" height="3.6" rx="0.9" fill="#fff" stroke="none"/>
<line x1="486.5" y1="271.5" x2="486.5" y2="302.5" stroke-width="3"/>
<line x1="501.5" y1="263.5" x2="501.5" y2="271.5"/>
<path d="M501.5 271.5 a7.75 7.75 0 0 0 0 15.5 a7.75 7.75 0 0 0 0 15.5" stroke-width="1.200"/>
<line x1="501.5" y1="302.5" x2="501.5" y2="380.5"/>
<rect x="499.7" y="261.7" width="3.6" height="3.6" rx="0.9" fill="#fff" stroke="none"/>
<rect x="499.7" y="308.7" width="3.6" height="3.6" rx="0.9" fill="#fff" stroke="none"/>
<rect x="499.7" y="378.7" width="3.6" height="3.6" rx="0.9" fill="#fff" stroke="none"/>
<line x1="501.5" y1="263.5" x2="525.5" y2="263.5"/>
<rect x="523.7" y="261.7" width="3.6" height="3.6" rx="0.9" fill="#fff" stroke="none"/>
<rect x="523.7" y="331.7" width="3.6" height="3.6" rx="0.9" fill="#fff" stroke="none"/>
<rect x="524.95" y="332.95" width="1.1" height="1.1" fill="#050505" stroke="none"/>
<line x1="517.5" y1="216.5" x2="533.5" y2="216.5"/>
<line x1="525.5" y1="216.5" x2="525.5" y2="235.5"/>
<line x1="517.5" y1="235.5" x2="533.5" y2="235.5"/>
<line x1="517.5" y1="243.5" x2="533.5" y2="243.5"/>
<line x1="525.5" y1="243.5" x2="525.5" y2="510.5"/>
<line x1="572.5" y1="192.5" x2="572.5" y2="278.5"/>
<path d="M572.5 278.5 a8 8 0 0 1 0 16" stroke-width="1.200"/>
<line x1="572.5" y1="294.5" x2="572.5" y2="380.5"/>
<rect x="570.7" y="261.7" width="3.6" height="3.6" rx="0.9" fill="#fff" stroke="none"/>
<rect x="570.7" y="308.7" width="3.6" height="3.6" rx="0.9" fill="#fff" stroke="none"/>
<polyline points="572.5,263.5 549.5,263.5 549.5,282.5"/>
<line x1="541.5" y1="282.5" x2="556.5" y2="282.5"/>
<line x1="541.5" y1="290.5" x2="556.5" y2="290.5"/>
<polyline points="549.5,290.5 549.5,310.5 572.5,310.5"/>
<line x1="588.5" y1="255.5" x2="588.5" y2="318.5" stroke-width="4.6"/>
<rect x="601.7" y="221.7" width="3.6" height="3.6" rx="0.9" fill="#fff" stroke="none"/>
<rect x="602.95" y="222.95" width="1.1" height="1.1" fill="#050505" stroke="none"/>
<rect x="633.7" y="221.7" width="3.6" height="3.6" rx="0.9" fill="#fff" stroke="none"/>
<rect x="634.95" y="222.95" width="1.1" height="1.1" fill="#050505" stroke="none"/>
<line x1="603.5" y1="223.5" x2="635.5" y2="223.5"/>
<line x1="603.5" y1="223.5" x2="603.5" y2="255.5"/>
<path d="M603.5 255.5 a7.88 7.88 0 0 0 0 15.75 a7.88 7.88 0 0 0 0 15.75 a7.88 7.88 0 0 0 0 15.75 a7.88 7.88 0 0 0 0 15.75" stroke-width="1.200"/>
<line x1="603.5" y1="318.5" x2="603.5" y2="349.5"/>
<line x1="596.5" y1="349.5" x2="611.5" y2="349.5"/>
<polyline points="623.5,161.5 635.5,161.5 635.5,192.5"/>
<rect x="633.7" y="190.7" width="3.6" height="3.6" rx="0.9" fill="#fff" stroke="none"/>
<rect x="634.95" y="191.95" width="1.1" height="1.1" fill="#050505" stroke="none"/>
<line x1="627.5" y1="192.5" x2="651.5" y2="208.5"/>
<rect x="649.7" y="206.7" width="3.6" height="3.6" rx="0.9" fill="#fff" stroke="none"/>
<rect x="650.95" y="207.95" width="1.1" height="1.1" fill="#050505" stroke="none"/>
<line x1="651.5" y1="208.5" x2="674.5" y2="208.5"/>
<circle cx="682.5" cy="208.5" r="7.85" stroke-width="1.100"/>
<circle cx="682.5" cy="208.5" r="1.6" fill="#fff" stroke="none"/>
<circle cx="682.5" cy="208.5" r="0.6" fill="#050505" stroke="none"/>
<line x1="682.5" y1="216.5" x2="682.5" y2="223.5"/>
<line x1="678.5" y1="223.5" x2="686.5" y2="223.5"/>
<polyline points="690.5,208.5 713.5,208.5 713.5,255.5"/>
<rect x="698.5" y="255.5" width="31" height="63"/>
<line x1="713.5" y1="318.5" x2="713.5" y2="349.5"/>
<line x1="705.5" y1="349.5" x2="722.5" y2="349.5"/>
<line x1="140.5" y1="396.5" x2="156.5" y2="396.5"/>
<line x1="148.5" y1="396.5" x2="148.5" y2="416.5"/>
<line x1="140.5" y1="416.5" x2="156.5" y2="416.5"/>
<line x1="140.5" y1="424.5" x2="156.5" y2="424.5"/>
<polyline points="148.5,424.5 148.5,490.5 180.5,490.5 199.5,512.5"/>
<rect x="146.7" y="441.7" width="3.6" height="3.6" rx="0.9" fill="#fff" stroke="none"/>
<rect x="147.95" y="442.95" width="1.1" height="1.1" fill="#050505" stroke="none"/>
<rect x="154.7" y="488.7" width="3.6" height="3.6" rx="0.9" fill="#fff" stroke="none"/>
<line x1="148.5" y1="443.5" x2="172.5" y2="443.5"/>
<rect x="172.5" y="428.5" width="47" height="31"/>
<line x1="187.5" y1="396.5" x2="203.5" y2="396.5"/>
<line x1="195.5" y1="396.5" x2="195.5" y2="428.5"/>
<line x1="219.5" y1="443.5" x2="274.5" y2="443.5"/>
<line x1="235.5" y1="396.5" x2="250.5" y2="396.5"/>
<line x1="242.5" y1="396.5" x2="242.5" y2="416.5"/>
<line x1="235.5" y1="416.5" x2="250.5" y2="416.5"/>
<line x1="235.5" y1="424.5" x2="250.5" y2="424.5"/>
<line x1="242.5" y1="424.5" x2="242.5" y2="443.5"/>
<rect x="240.7" y="441.7" width="3.6" height="3.6" rx="0.9" fill="#fff" stroke="none"/>
<rect x="241.95" y="442.95" width="1.1" height="1.1" fill="#050505" stroke="none"/>
<rect x="264.7" y="441.7" width="3.6" height="3.6" rx="0.9" fill="#fff" stroke="none"/>
<rect x="274.5" y="435.5" width="31" height="16"/>
<line x1="305.5" y1="443.5" x2="321.5" y2="443.5"/>
<rect x="311.7" y="441.7" width="3.6" height="3.6" rx="0.9" fill="#fff" stroke="none"/>
<rect x="321.5" y="435.5" width="31" height="16"/>
<line x1="352.5" y1="443.5" x2="368.5" y2="443.5"/>
<rect x="358.7" y="441.7" width="3.6" height="3.6" rx="0.9" fill="#fff" stroke="none"/>
<rect x="368.5" y="435.5" width="31" height="16"/>
<line x1="399.5" y1="443.5" x2="423.5" y2="443.5"/>
<rect x="405.7" y="441.7" width="3.6" height="3.6" rx="0.9" fill="#fff" stroke="none"/>
<line x1="423.5" y1="435.5" x2="423.5" y2="451.5"/>
<circle cx="203.5" cy="514.5" r="23.55" stroke-width="1.100"/>
<line x1="195.5" y1="514.5" x2="211.5" y2="514.5" stroke-width="3"/>
<polyline points="203.5,514.5 203.5,569.5"/>
<rect x="201.7" y="551.7" width="3.6" height="3.6" rx="0.9" fill="#fff" stroke="none"/>
<polyline points="203.5,553.5 250.5,553.5 250.5,537.5"/>
<polyline points="227.5,490.5 208.5,511.5"/>
<polygon points="204.5,513.5 208.5,506.5 212.5,511.5" fill="#fff"/>
<line x1="227.5" y1="490.5" x2="329.5" y2="490.5"/>
<rect x="248.7" y="488.7" width="3.6" height="3.6" rx="0.9" fill="#fff" stroke="none"/>
<rect x="295.7" y="488.7" width="3.6" height="3.6" rx="0.9" fill="#fff" stroke="none"/>
<line x1="250.5" y1="490.5" x2="250.5" y2="506.5"/>
<rect x="242.5" y="506.5" width="16" height="31"/>
<line x1="297.5" y1="490.5" x2="297.5" y2="510.5"/>
<line x1="289.5" y1="510.5" x2="305.5" y2="510.5"/>
<line x1="289.5" y1="518.5" x2="305.5" y2="518.5"/>
<line x1="297.5" y1="518.5" x2="297.5" y2="537.5"/>
<line x1="293.5" y1="537.5" x2="301.5" y2="537.5"/>
<rect x="319.7" y="488.7" width="3.6" height="3.6" rx="0.9" fill="#fff" stroke="none"/>
<rect x="320.95" y="489.95" width="1.1" height="1.1" fill="#050505" stroke="none"/>
<rect x="329.5" y="482.5" width="31" height="16"/>
<line x1="360.5" y1="490.5" x2="525.5" y2="490.5"/>
<rect x="366.7" y="488.7" width="3.6" height="3.6" rx="0.9" fill="#fff" stroke="none"/>
<rect x="367.95" y="489.95" width="1.1" height="1.1" fill="#050505" stroke="none"/>
<rect x="390.7" y="488.7" width="3.6" height="3.6" rx="0.9" fill="#fff" stroke="none"/>
<line x1="392.5" y1="490.5" x2="392.5" y2="510.5"/>
<line x1="384.5" y1="510.5" x2="399.5" y2="510.5"/>
<line x1="384.5" y1="518.5" x2="399.5" y2="518.5"/>
<line x1="392.5" y1="518.5" x2="392.5" y2="537.5"/>
<line x1="385.5" y1="537.5" x2="398.5" y2="537.5"/>
<rect x="523.7" y="488.7" width="3.6" height="3.6" rx="0.9" fill="#fff" stroke="none"/>
<rect x="524.95" y="489.95" width="1.1" height="1.1" fill="#050505" stroke="none"/>
<line x1="517.5" y1="510.5" x2="533.5" y2="510.5"/>
<line x1="517.5" y1="518.5" x2="533.5" y2="518.5"/>
<line x1="525.5" y1="518.5" x2="525.5" y2="537.5"/>
<line x1="521.5" y1="537.5" x2="529.5" y2="537.5"/>
<rect x="523.7" y="441.7" width="3.6" height="3.6" rx="0.9" fill="#fff" stroke="none"/>
<rect x="524.95" y="442.95" width="1.1" height="1.1" fill="#050505" stroke="none"/>
<line x1="525.5" y1="443.5" x2="541.5" y2="443.5"/>
<path d="M541.5 443.5 a15.67 15.35 0 0 1 31.33 0 a15.67 15.35 0 0 1 31.33 0 a15.67 15.35 0 0 1 31.33 0" stroke-width="1.200"/>
<line x1="635.5" y1="443.5" x2="666.5" y2="443.5"/>
<rect x="649.7" y="441.7" width="3.6" height="3.6" rx="0.9" fill="#fff" stroke="none"/>
<rect x="650.95" y="442.95" width="1.1" height="1.1" fill="#050505" stroke="none"/>
<line x1="541.5" y1="455" x2="635.5" y2="455" stroke-width="3"/>
<rect x="666.5" y="435.5" width="32" height="16" stroke-width="2.4"/>
<line x1="698.5" y1="443.5" x2="715.5" y2="443.5"/>
<circle cx="721.5" cy="443.5" r="4.500" stroke-width="5.200"/>
</g>
<g class="cad" stroke="none">
<text x="249.42 257.07 264.73 272.38 280.02 287.68 295.32 302.98" y="146.2" font-size="13" fill="#0ff">BN43-202</text>
<text x="472.64 479.91 487.18 494.45 501.72 508.99 516.26" y="146.2" font-size="13" fill="#0ff">FT50-61</text>
<text x="574.92 582.37 589.82 597.27 604.72 612.17" y="146.2" font-size="13" fill="#0ff">AL2800</text>
<text x="472.96 480.88 488.8 496.72 504.64" y="184.9" font-size="12.5" fill="#0ff">2x5zw</text>
<text x="326.81 332.24 337.66 343.09" y="205" font-size="10.2" fill="#0ff">100n</text>
<text x="331.16 336.49 341.81 347.14" y="346.2" font-size="10.2" fill="#0ff">100n</text>
<text x="179.65 187.15 194.65 202.15 209.65" y="448.2" font-size="13.6" fill="#0ff">78L06</text>
<text x="288.23 294.68" y="448.2" font-size="12.4" fill="#0ff">1k</text>
<text x="334.15 342.45" y="448.2" font-size="12.4" fill="#0ff">5k</text>
<text x="382.4" y="448.2" font-size="12.4" fill="#0ff">0</text>
<text x="333.62 341.27 348.92 356.57" y="495.2" font-size="12.8" fill="#0ff">47uH</text>
<text x="578.16 585.29 592.41 599.54" y="425.2" font-size="12.2" fill="#0ff">10uH</text>
<text x="709.5" y="432.6" font-size="16.5" fill="#ff0">+</text>
<text x="723.38 730.14 736.9 743.66 750.42" y="429.4" font-size="13.4" fill="#ff0">13.8V</text>
<text transform="translate(278.8 295) rotate(-90)" x="2.72 9.35 15.98" y="0" font-size="10" fill="#0ff">3zw</text>
<text transform="translate(322.6 295) rotate(-90)" x="2.72 9.35 15.98" y="0" font-size="10" fill="#0ff">2zw</text>
<text transform="translate(365.6 259.9) rotate(-90)" x="2.4 8.4" y="0" font-size="10" fill="#0ff">12</text>
<text transform="translate(365.6 323) rotate(-90)" x="2.35 8.25" y="0" font-size="10" fill="#0ff">12</text>
<text transform="translate(441 304.3) rotate(-90) scale(0.62 1)" x="3.9 13.63 23.36 33.09 42.82 52.55" y="0" font-size="12.4" fill="#0ff">MRF186</text>
<text transform="translate(514 247.8) rotate(-90)" x="2.55 8.85 15.15 21.45" y="0" font-size="13" fill="#0ff">100n</text>
<text transform="translate(569.2 295.6) rotate(-90)" x="2.3 8.1 13.9" y="0" font-size="9.4" fill="#0ff">1zw</text>
<text transform="translate(612.3 299.2) rotate(-90)" x="2.73 9.4 16.07" y="0" font-size="9.4" fill="#0ff">3zw</text>
<text transform="translate(718.8 307.2) rotate(-90)" x="3.89 12.87 21.85 30.83 39.81" y="0" font-size="14.6" fill="#0ff">50 om</text>
<text transform="translate(138.6 436.4) rotate(-90)" x="2.67 9.22 15.78 22.32" y="0" font-size="13.5" fill="#0ff">100n</text>
<text transform="translate(232.3 432.5) rotate(-90)" x="2.69 9.26 15.84 22.41" y="0" font-size="13.5" fill="#0ff">100n</text>
<text transform="translate(255.2 531.2) rotate(-90)" x="2.68 9.25 15.82" y="0" font-size="12.8" fill="#0ff">10k</text>
<text transform="translate(381.3 527.1) rotate(-90)" x="2.75 9.45 16.15 22.85" y="0" font-size="13.5" fill="#0ff">100n</text>
<text transform="translate(514.4 534.5) rotate(-90)" x="3.15 10.65 18.15 25.65 33.15" y="0" font-size="13.5" fill="#0ff">220uF</text>
</g>
<g stroke="#fff" stroke-width="1" stroke-dasharray="1 14.700" fill="none" shape-rendering="crispEdges" style="mix-blend-mode:difference"><path d="M38.25 98.5H994"/><path d="M38.25 114.5H994"/><path d="M38.25 129.5H994"/><path d="M38.25 145.5H994"/><path d="M38.25 161.5H994"/><path d="M38.25 176.5H994"/><path d="M38.25 192.5H994"/><path d="M38.25 208.5H994"/><path d="M38.25 223.5H994"/><path d="M38.25 239.5H994"/><path d="M38.25 255.5H994"/><path d="M38.25 271.5H994"/><path d="M38.25 286.5H994"/><path d="M38.25 302.5H994"/><path d="M38.25 318.5H994"/><path d="M38.25 333.5H994"/><path d="M38.25 349.5H994"/><path d="M38.25 365.5H994"/><path d="M38.25 380.5H994"/><path d="M38.25 396.5H994"/><path d="M38.25 412.5H994"/><path d="M38.25 428.5H994"/><path d="M38.25 443.5H994"/><path d="M38.25 459.5H994"/><path d="M38.25 475.5H994"/><path d="M38.25 490.5H994"/><path d="M38.25 506.5H994"/><path d="M38.25 522.5H994"/><path d="M38.25 537.5H994"/><path d="M38.25 553.5H994"/><path d="M38.25 569.5H994"/><path d="M38.25 585.5H994"/><path d="M38.25 600.5H994"/></g>
<path d="M617 137.500h3.500M617 147.500h3.500M618.700 137.500v10" stroke="#fff" stroke-width="1" fill="none"/>
<g>
<rect x="994" y="98" width="17" height="511" fill="#f9f9f5"/>
<rect x="1011" y="95" width="2" height="531" fill="#fdfdfb"/>
<rect x="2" y="609" width="1011" height="17" fill="#f9f9f5"/>
<rect x="994" y="609" width="19" height="17" fill="#f4f4ec"/>
<rect x="996" y="99.5" width="13" height="13" fill="#c4d3fb" rx="2" stroke="#fff" stroke-width="1"/>
<rect x="997" y="110.5" width="11" height="1.5" fill="#a9bdf0"/>
<path d="M999 108.200l3.600-3.600 3.600 3.600" fill="none" stroke="#4d6185" stroke-width="2.200"/>
<rect x="996.5" y="593.5" width="13" height="13.5" fill="#c4d3fb" rx="2" stroke="#fff" stroke-width="1"/>
<rect x="997.5" y="605" width="11" height="1.5" fill="#a9bdf0"/>
<path d="M999.500 598.400l3.600 3.600 3.600-3.600" fill="none" stroke="#4d6185" stroke-width="2.200"/>
<rect x="996" y="331.5" width="13.5" height="14.5" fill="#c4d3fb" rx="2" stroke="#fff" stroke-width="1"/>
<rect x="997" y="344" width="11.5" height="1.5" fill="#a9bdf0"/>
<path d="M1000 336h5.600M1000 338h5.600M1000 340h5.600M1000 342h5.600" stroke="#eef3ff" stroke-width="1"/>
<rect x="3.5" y="611" width="13.5" height="13.5" fill="#c4d3fb" rx="2" stroke="#fff" stroke-width="1"/>
<rect x="4.5" y="622.5" width="11.5" height="1.5" fill="#a9bdf0"/>
<path d="M12 614.200l-3.600 3.600 3.600 3.600" fill="none" stroke="#4d6185" stroke-width="2.200"/>
<rect x="978.5" y="611" width="14" height="13.5" fill="#c4d3fb" rx="2" stroke="#fff" stroke-width="1"/>
<rect x="979.5" y="622.5" width="12" height="1.5" fill="#a9bdf0"/>
<path d="M984.400 614.200l3.600 3.600-3.600 3.600" fill="none" stroke="#4d6185" stroke-width="2.200"/>
<rect x="20.5" y="611" width="14" height="13.5" fill="#c4d3fb" rx="2" stroke="#fff" stroke-width="1"/>
<rect x="21.5" y="622.5" width="12" height="1.5" fill="#a9bdf0"/>
<path d="M24.500 614.500v6.600M26.500 614.500v6.600M28.500 614.500v6.600M30.500 614.500v6.600" stroke="#eef3ff" stroke-width="1"/>
<rect x="0" y="627.6" width="1013" height="1.8" fill="#111"/>
<rect x="0" y="632.6" width="1013" height="1.3" fill="#222"/>
<rect x="3" y="637" width="1006" height="1.2" fill="#111"/>
<rect x="3" y="637" width="1.2" height="47" fill="#111"/>
<rect x="4.2" y="670" width="990" height="1" fill="#9a9a9a"/>
<rect x="995" y="640" width="13" height="12.5" fill="#c4d3fb" rx="2" stroke="#fff" stroke-width="1"/>
<rect x="996" y="650.5" width="11" height="1.5" fill="#a9bdf0"/>
<path d="M998 648.400l3.600-3.600 3.600 3.600" fill="none" stroke="#4d6185" stroke-width="2.200"/>
<rect x="995" y="655" width="13" height="12.5" fill="#c4d3fb" rx="2" stroke="#fff" stroke-width="1"/>
<rect x="996" y="665.5" width="11" height="1.5" fill="#a9bdf0"/>
<path d="M998 659.400l3.600 3.600 3.600-3.600" fill="none" stroke="#4d6185" stroke-width="2.200"/>
<rect x="994" y="670" width="15" height="1" fill="#9a9a9a"/>
<rect x="941.5" y="672" width="1.2" height="12" fill="#a0a0a0"/>
<rect x="957.5" y="672" width="1.2" height="12" fill="#a0a0a0"/>
<rect x="990" y="672" width="1.2" height="12" fill="#a0a0a0"/>
<path d="M935.200 676v7l-4.200-3.500zM980.800 676v7l4.200-3.500z" fill="#0000e0"/>
</g>
</svg>
<pre class="cmd">Wysokość &lt;1.2500&gt;:
Kąt obrotu &lt;0&gt;:</pre>
<pre class="cmd cmd3">Tekst: AL2800</pre>
<svg width="1013" height="710" viewBox="0 0 1013 710">
<defs><linearGradient id="tg" x1="0" y1="0" x2="0" y2="1"><stop offset="0" stop-color="#2d6fe6"/><stop offset=".1" stop-color="#3f82f2"/><stop offset=".2" stop-color="#3577ec"/><stop offset=".32" stop-color="#2966e2"/><stop offset="1" stop-color="#2662e0"/></linearGradient><linearGradient id="sg" x1="0" y1="0" x2="0" y2="1"><stop offset="0" stop-color="#5aae5a"/><stop offset=".2" stop-color="#3d9a3f"/><stop offset="1" stop-color="#37943a"/></linearGradient><linearGradient id="yg" x1="0" y1="0" x2="0" y2="1"><stop offset="0" stop-color="#1d9ff5"/><stop offset=".2" stop-color="#1290e8"/><stop offset="1" stop-color="#1391ea"/></linearGradient></defs>
<rect x="0" y="684" width="1013" height="26" fill="url(#tg)"/>
<rect x="0" y="684" width="1013" height="1.500" fill="#0f3fa8" opacity=".55"/>
<path d="M0 687.500H79Q92.500 689.500 93 703V710H0Z" fill="url(#sg)"/>
<path d="M79 687.500Q92.500 689.500 93 703V710" fill="none" stroke="#2a7a2e" stroke-width="1.600" opacity=".8"/>
<g transform="translate(8 693) skewX(-10)"><rect x="1" y="0" width="6.500" height="7" rx="1.500" fill="#e8562a"/><rect x="9" y="1" width="6.500" height="7" rx="1.500" fill="#7cc242"/><rect x="0" y="9" width="6.500" height="8" rx="1.500" fill="#3b87e0"/><rect x="8" y="10" width="6.500" height="8" rx="1.500" fill="#f4c020"/></g>
<text x="29.500" y="709.200" font-family="Liberation Sans,sans-serif" font-size="18" font-weight="bold" font-style="italic" fill="#fff" textLength="39.500" lengthAdjust="spacingAndGlyphs">Start</text>
<rect x="103" y="690" width="1.600" height="1.600" fill="#0d3e9e"/>
<rect x="104" y="691" width="1.200" height="1.200" fill="#6fa0f0"/>
<rect x="106" y="695" width="1.600" height="1.600" fill="#0d3e9e"/>
<rect x="107" y="696" width="1.200" height="1.200" fill="#6fa0f0"/>
<rect x="103" y="700" width="1.600" height="1.600" fill="#0d3e9e"/>
<rect x="104" y="701" width="1.200" height="1.200" fill="#6fa0f0"/>
<rect x="106" y="705" width="1.600" height="1.600" fill="#0d3e9e"/>
<rect x="107" y="706" width="1.200" height="1.200" fill="#6fa0f0"/>
<rect x="113.500" y="691.500" width="158" height="24" rx="2.500" fill="#1e52b7" stroke="#163e94" stroke-width="1"/>
<rect x="274.500" y="691.500" width="157" height="24" rx="2.500" fill="#3a81f3" stroke="#2a62cf" stroke-width="1"/>
<rect x="275.500" y="692.500" width="155" height="1.500" fill="#5a9cff" opacity=".7"/>
<rect x="124" y="696" width="14.500" height="14" fill="#101010"/>
<path d="M124 710V706Q128 703 138.500 702.500V710Z" fill="#e01818"/>
<text x="125.300" y="706.300" font-family="Liberation Sans,sans-serif" font-size="10" font-weight="bold" fill="#fff" textLength="11.500" lengthAdjust="spacingAndGlyphs">14</text>
<rect x="138.500" y="696" width="2.500" height="14" fill="#fff"/>
<text x="143.500" y="708.200" font-family="Liberation Sans,sans-serif" font-size="11.300" fill="#fff" textLength="112.500" lengthAdjust="spacingAndGlyphs">AutoCAD - [Pa_MRF....</text>
<rect x="283" y="695.500" width="15" height="14.500" fill="#fff"/>
<path d="M290.500 696l1.500 4.500 5.500-2.500-3 4.500 4 3.500-5.500-.5-1 4.500-2.500-4-5.500 2.500 3.500-5-4-3.500 5 .5z" fill="#e01010"/>
<text x="301.500" y="708.200" font-family="Liberation Sans,sans-serif" font-size="11.300" fill="#fff" textLength="47" lengthAdjust="spacingAndGlyphs">IrfanView</text>
<path d="M908.500 710V691.500Q908.500 688.500 911.500 688.500H1013V710Z" fill="url(#yg)"/>
<path d="M908.500 710V691.500Q908.500 688.500 911.500 688.500H1013" fill="none" stroke="#1468c8" stroke-width="1"/>

<circle cx="909.500" cy="703.500" r="7.800" fill="#2a7fe8" stroke="#bfe0ff" stroke-width="1.200"/><path d="M911.800 699.500l-4 4 4 4" fill="none" stroke="#fff" stroke-width="2.200"/>
<rect x="920.500" y="696.500" width="13.500" height="14" rx="4" fill="#fff" stroke="#1d9e90" stroke-width="1.300"/>
<text x="923" y="708.300" font-family="Liberation Sans,sans-serif" font-size="13.500" font-weight="bold" fill="#168f84">e</text>
<rect x="937.500" y="697" width="9.500" height="7.500" fill="#243a78" stroke="#9fb4dc" stroke-width="1"/><rect x="938.500" y="706" width="8" height="2.500" fill="#b8c4dc"/><path d="M949.500 698q2 3 0 6M952 696.500q3 4.500 0 9" fill="none" stroke="#e8f0ff" stroke-width="1.100"/>
<circle cx="961.500" cy="702.500" r="5.600" fill="#8a8a8a" stroke="#d8d8d8" stroke-width="1.300"/><circle cx="960.500" cy="702" r="2.200" fill="#3a3a3a"/><path d="M965 708l3-4" stroke="#7ab0ff" stroke-width="1"/>
<text x="977.300" y="708.200" font-family="Liberation Sans,sans-serif" font-size="11.300" fill="#fff" textLength="27" lengthAdjust="spacingAndGlyphs">23:01</text>
</svg>
</body></html>
